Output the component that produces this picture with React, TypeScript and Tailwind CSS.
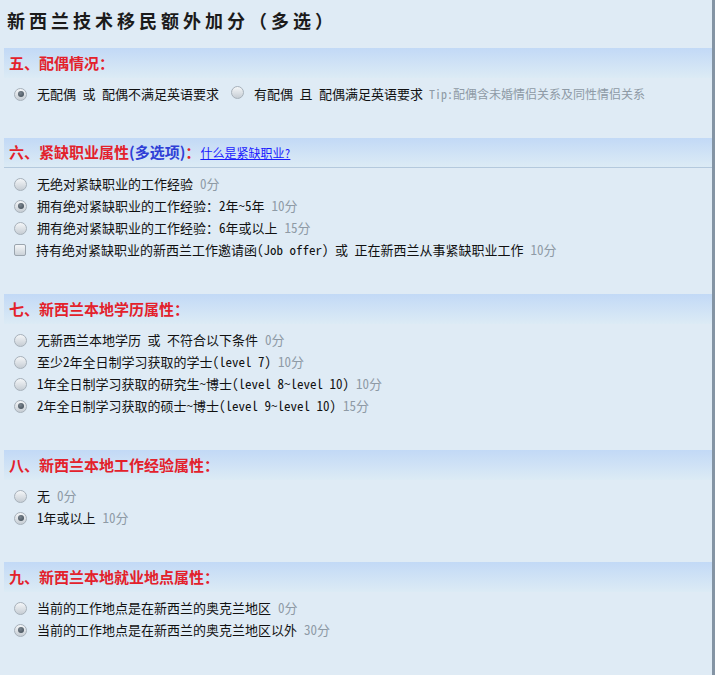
import type { ReactNode } from "react";

const cjk = { fontFamily: '"Noto Sans Mono CJK SC", "Noto Sans CJK SC", sans-serif' };
const cjkProp = { fontFamily: '"Noto Sans CJK SC", sans-serif' };

type Option = { label: string; score: string; checked?: boolean; box?: boolean };

const sections: { title: string; options: Option[] }[] = [
  {
    title: "七、新西兰本地学历属性：",
    options: [
      { label: "无新西兰本地学历 或 不符合以下条件", score: "0分" },
      { label: "至少2年全日制学习获取的学士(level 7)", score: "10分" },
      { label: "1年全日制学习获取的研究生~博士(level 8~level 10)", score: "10分" },
      { label: "2年全日制学习获取的硕士~博士(level 9~level 10)", score: "15分", checked: true },
    ],
  },
  {
    title: "八、新西兰本地工作经验属性：",
    options: [
      { label: "无", score: "0分" },
      { label: "1年或以上", score: "10分", checked: true },
    ],
  },
  {
    title: "九、新西兰本地就业地点属性：",
    options: [
      { label: "当前的工作地点是在新西兰的奥克兰地区", score: "0分" },
      { label: "当前的工作地点是在新西兰的奥克兰地区以外", score: "30分", checked: true },
    ],
  },
];

const jobOptions: Option[] = [
  { label: "无绝对紧缺职业的工作经验", score: "0分" },
  { label: "拥有绝对紧缺职业的工作经验：2年~5年", score: "10分", checked: true },
  { label: "拥有绝对紧缺职业的工作经验：6年或以上", score: "15分" },
  {
    label: "持有绝对紧缺职业的新西兰工作邀请函(Job offer) 或 正在新西兰从事紧缺职业工作",
    score: "10分",
    box: true,
  },
];

function Radio({ checked }: { checked?: boolean }) {
  return (
    <span className="inline-flex h-[13px] w-[13px] shrink-0 items-center justify-center rounded-full border border-[#a7b1ba] bg-[linear-gradient(#f4f6f8,#c6cdd4)]">
      {checked && (
        <span className="h-[6px] w-[6px] rounded-full bg-[radial-gradient(circle_at_40%_35%,#7a858f,#3d4852)]" />
      )}
    </span>
  );
}

function Checkbox() {
  return (
    <span className="inline-block h-[12px] w-[12px] shrink-0 rounded-[2px] border border-[#9ba5ae] bg-[linear-gradient(#f4f6f8,#cbd2d8)]" />
  );
}

function Header({ children, line }: { children: ReactNode; line?: boolean }) {
  return (
    <div
      className={`flex h-[30px] items-center bg-[linear-gradient(#c2d9f6,#dcebf5)] pl-[5px] text-[15px] font-bold text-[#e3212b] ${
        line ? "border-b border-[#b4c9dd]" : ""
      }`}
      style={cjk}
    >
      {children}
    </div>
  );
}

function Row({ o }: { o: Option }) {
  return (
    <div className="flex h-[22px] items-center pl-[10px] text-[13px] text-[#111]" style={cjk}>
      {o.box ? <Checkbox /> : <Radio checked={o.checked} />}
      <span className="ml-[10px] whitespace-pre">{o.label}</span>
      <span className="ml-[7px] text-[#8e9aa5]">{o.score}</span>
    </div>
  );
}

export default function App() {
  return (
    <div className="h-[675px] w-[715px] overflow-hidden border-r-[3px] border-[#8494a4] bg-[#dfebf5] pl-[4px]">
      <div
        className="mb-[8px] flex h-[40px] items-center pl-[3px] text-[18px] font-bold tracking-[4px] text-[#1b1b1b]"
        style={cjk}
      >
        新西兰技术移民额外加分（多选）
      </div>

      <section className="pb-[33px]">
        <Header>五、配偶情况：</Header>
        <div className="pt-[5px]">
          <div className="flex h-[22px] items-center pl-[10px] text-[13px] text-[#111]" style={cjk}>
            <Radio checked />
            <span className="ml-[10px] whitespace-pre">无配偶 或 配偶不满足英语要求</span>
            <span className="ml-[12px]">
              <Radio />
            </span>
            <span className="ml-[10px] whitespace-pre">有配偶 且 配偶满足英语要求</span>
            <span className="ml-[6px] text-[12px] text-[#8e9aa5]">Tip:配偶含未婚情侣关系及同性情侣关系</span>
          </div>
        </div>
      </section>

      <section className="pb-[33px]">
        <Header line>
          六、紧缺职业属性
          <span className="text-[#2f3fd6]" style={cjkProp}>
            (多选项)
          </span>
          ：
          <a href="#" className="text-[12px] font-normal text-[#1a1aff] underline">
            什么是紧缺职业?
          </a>
        </Header>
        <div className="pt-[5px]">
          {jobOptions.map((o) => (
            <Row key={o.label} o={o} />
          ))}
        </div>
      </section>

      {sections.map((s) => (
        <section key={s.title} className="pb-[33px]">
          <Header>{s.title}</Header>
          <div className="pt-[5px]">
            {s.options.map((o) => (
              <Row key={o.label} o={o} />
            ))}
          </div>
        </section>
      ))}
    </div>
  );
}
